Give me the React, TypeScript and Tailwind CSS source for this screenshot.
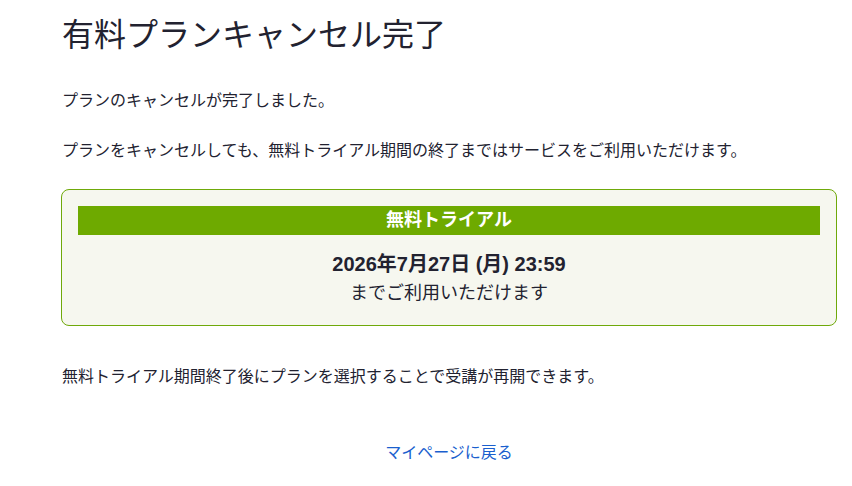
const jp = "font-['Hiragino_Sans','Liberation_Sans','Noto_Sans_CJK_JP',sans-serif]";

export default function App() {
  return (
    <div className={`min-h-screen bg-white text-[#222230] ${jp}`}>
      <div className="ml-[61px] w-[776px] pt-[11px]">
        <h1 className="pl-px text-[32px] leading-[48px] font-normal">有料プランキャンセル完了</h1>

        <p className="mt-[30px] pl-px text-[16px] leading-[24px]">プランのキャンセルが完了しました。</p>
        <p className="mt-[26px] pl-px text-[16px] leading-[24px]">
          プランをキャンセルしても、無料トライアル期間の終了まではサービスをご利用いただけます。
        </p>

        <div className="mt-[26px] rounded-[8px] border border-[#6fa90a] bg-[#f6f7ef] px-4 pt-4 pb-[19px] text-center">
          <div className="h-[29px] bg-[#6eaa00] text-[18px] leading-[29px] font-bold text-white">無料トライアル</div>
          <div className="mt-[15px] text-[20px] leading-[28px] font-bold">2026年7月27日 (月) 23:59</div>
          <div className="mt-[2px] text-[18px] leading-[26px]">までご利用いただけます</div>
        </div>

        <p className="mt-[39px] pl-px text-[16px] leading-[24px]">
          無料トライアル期間終了後にプランを選択することで受講が再開できます。
        </p>

        <div className="mt-[52px] text-center">
          <a href="#" className="text-[16px] leading-[24px] text-[#1a5fce]">マイページに戻る</a>
        </div>
      </div>
    </div>
  );
}
